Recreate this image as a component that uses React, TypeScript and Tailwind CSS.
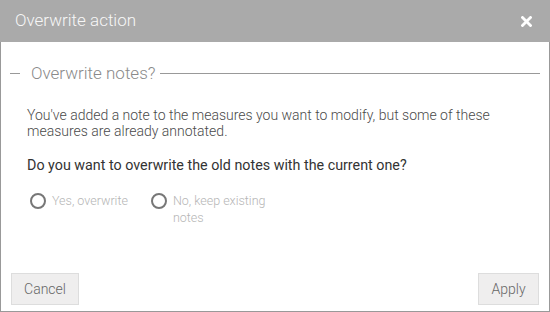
import React from "react";

function Radio({ label, wide }: { label: string; wide?: boolean }) {
  return (
    <div className="flex items-start gap-[6px]">
      <span className="mt-[1px] w-[16px] h-[16px] rounded-full border-2 border-[#777] shrink-0 bg-white" />
      <span className={"text-[12.5px] leading-[17px] font-light text-[#b5b5b5] " + (wide ? "w-[100px]" : "")}>{label}</span>
    </div>
  );
}

export default function App() {
  return (
    <div className="w-[550px] h-[312px] flex flex-col bg-white" style={{ fontFamily: "Roboto, 'Liberation Sans', sans-serif" }}>
      <div className="h-[42px] shrink-0 bg-[#aaaaaa] flex items-center justify-between pl-[15px] pr-[18px]">
        <span className="text-[17px] font-light text-[#f7f7f7]">Overwrite action</span>
        <svg width="11" height="11" viewBox="0 0 11 11" className="mt-[1px]">
          <path d="M1.5 1.5 L9.5 9.5 M9.5 1.5 L1.5 9.5" stroke="#ffffff" strokeWidth="2.8" strokeLinecap="square" />
        </svg>
      </div>
      <div className="flex-1 flex flex-col border-x border-b border-[#999] pt-[21px]">
        <div className="mx-[9px]">
          <div className="h-[20px] flex items-center">
            <span className="w-[10px] h-px bg-[#999]" />
            <span className="ml-[11px] mr-[4px] text-[17px] font-light text-[#8a8a8a] leading-[20px]">Overwrite notes?</span>
            <span className="flex-1 h-px bg-[#999]" />
          </div>
          <div className="pl-[17px] pr-[14px]">
            <p className="mt-[24px] text-[14px] leading-[16px] font-light text-[#4a4a4a]">
              You've added a note to the measures you want to modify, but some of these measures are already annotated.
            </p>
            <p className="mt-[18px] text-[14.3px] leading-[16px] text-[#333]">
              Do you want to overwrite the old notes with the current one?
            </p>
            <div className="mt-[19px] flex items-start gap-[23px] pl-[3px]">
              <Radio label="Yes, overwrite" />
              <Radio label="No, keep existing notes" wide />
            </div>
          </div>
        </div>
        <div className="mt-auto flex justify-between px-[10px] pb-[6px]">
          <button className="h-[32px] w-[68px] bg-[#efeeee] border border-[#dddddd] text-[14px] font-light text-[#666]">Cancel</button>
          <button className="h-[32px] w-[61px] bg-[#efeeee] border border-[#dddddd] text-[14px] font-light text-[#666]">Apply</button>
        </div>
      </div>
    </div>
  );
}
